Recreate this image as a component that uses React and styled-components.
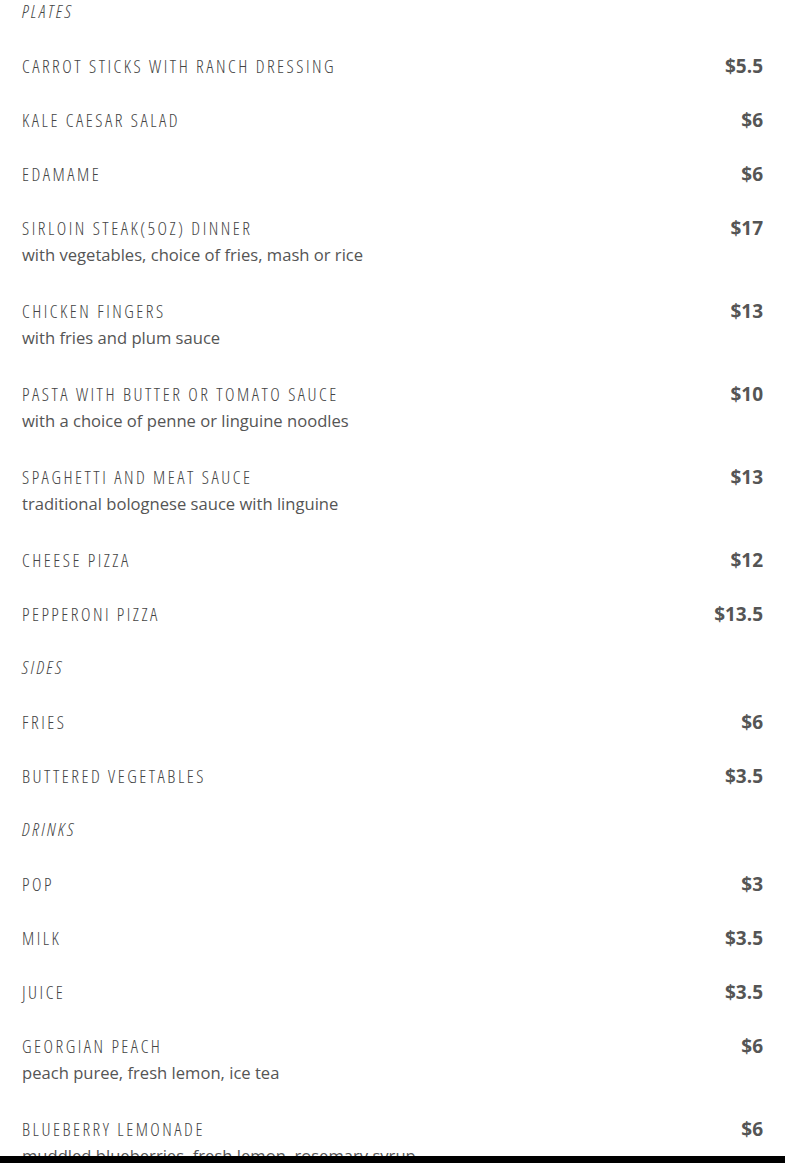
import React from "react";
import styled, { createGlobalStyle } from "styled-components";

const GlobalStyle = createGlobalStyle`
  html, body { margin: 0; padding: 0; background: #fff; }
  body { font-family: "Open Sans", "Liberation Sans", sans-serif; color: #555; }
`;

const Page = styled.main`
  padding: 0 22px;
`;

const Section = styled.section`
  display: flex;
  flex-direction: column;
`;

const SectionTitle = styled.h2`
  margin: 0 0 32px;
  font-family: "Open Sans", sans-serif;
  font-stretch: condensed;
  font-weight: 300;
  font-style: italic;
  font-size: 18px;
  line-height: 22px;
  letter-spacing: 2.4px;
  text-transform: uppercase;
  color: #444;
`;

const Item = styled.div`
  display: grid;
  grid-template-columns: 1fr auto;
  column-gap: 20px;
  margin-bottom: 30px;
`;

const ItemName = styled.div`
  font-family: "Open Sans", sans-serif;
  font-stretch: condensed;
  font-weight: 300;
  font-size: 18px;
  line-height: 24px;
  letter-spacing: 2.5px;
  text-transform: uppercase;
  color: #444;
`;

const Price = styled.div`
  font-family: "Open Sans", sans-serif;
  font-weight: 700;
  font-size: 19px;
  line-height: 24px;
  color: #555;
  text-align: right;
`;

const Desc = styled.div`
  grid-column: 1 / -1;
  font-family: "Open Sans", sans-serif;
  font-size: 16.6px;
  line-height: 29px;
  color: #555;
`;

const BottomBar = styled.div`
  position: fixed;
  left: 0;
  right: 0;
  bottom: 0;
  height: 7px;
  background: #000;
`;

const menu = [
  {
    title: "Plates",
    items: [
      { name: "Carrot sticks with ranch dressing", price: "$5.5" },
      { name: "Kale caesar salad", price: "$6" },
      { name: "Edamame", price: "$6" },
      { name: "Sirloin steak(5oz) dinner", price: "$17", desc: "with vegetables, choice of fries, mash or rice" },
      { name: "Chicken fingers", price: "$13", desc: "with fries and plum sauce" },
      { name: "Pasta with butter or tomato sauce", price: "$10", desc: "with a choice of penne or linguine noodles" },
      { name: "Spaghetti and meat sauce", price: "$13", desc: "traditional bolognese sauce with linguine" },
      { name: "Cheese pizza", price: "$12" },
      { name: "Pepperoni pizza", price: "$13.5" },
    ],
  },
  {
    title: "Sides",
    items: [
      { name: "Fries", price: "$6" },
      { name: "Buttered vegetables", price: "$3.5" },
    ],
  },
  {
    title: "Drinks",
    items: [
      { name: "Pop", price: "$3" },
      { name: "Milk", price: "$3.5" },
      { name: "Juice", price: "$3.5" },
      { name: "Georgian peach", price: "$6", desc: "peach puree, fresh lemon, ice tea" },
      { name: "Blueberry lemonade", price: "$6", desc: "muddled blueberries, fresh lemon, rosemary syrup" },
    ],
  },
];

export default function App() {
  return (
    <>
      <GlobalStyle />
      <Page>
        {menu.map((section) => (
          <Section key={section.title}>
            <SectionTitle>{section.title}</SectionTitle>
            {section.items.map((item) => (
              <Item key={item.name}>
                <ItemName>{item.name}</ItemName>
                <Price>{item.price}</Price>
                {item.desc && <Desc>{item.desc}</Desc>}
              </Item>
            ))}
          </Section>
        ))}
      </Page>
      <BottomBar />
    </>
  );
}
